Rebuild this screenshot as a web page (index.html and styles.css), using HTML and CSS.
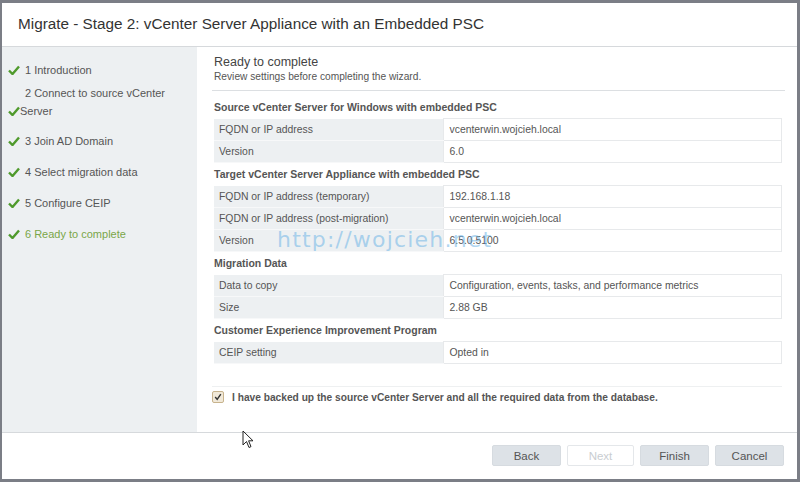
FILE: index.html
```html
<!DOCTYPE html>
<html lang="en">
<head>
    <meta charset="UTF-8">
    <meta name="viewport" content="width=device-width, initial-scale=1.0">
    <title>Migrate - Stage 2</title>
    <link rel="stylesheet" href="styles.css">
</head>
<body>
    <div class="dialog">
        <!-- Title bar -->
        <header class="dialog-header">
            <h1>Migrate - Stage 2: vCenter Server Appliance with an Embedded PSC</h1>
        </header>

        <div class="dialog-body">
            <!-- Wizard steps -->
            <ul class="steps">
                <li><span class="check"><svg viewBox="0 0 12 10" width="12" height="10"><path d="M1 5.5 L4.5 9 L11 1.5" fill="none" stroke="#4f9a2c" stroke-width="2.4"/></svg></span>1 Introduction</li>
                <li class="wrap"><span class="indent">2 Connect to source vCenter</span><br><span class="check tight"><svg viewBox="0 0 12 10" width="12" height="10"><path d="M1 5.5 L4.5 9 L11 1.5" fill="none" stroke="#4f9a2c" stroke-width="2.4"/></svg></span>Server</li>
                <li><span class="check"><svg viewBox="0 0 12 10" width="12" height="10"><path d="M1 5.5 L4.5 9 L11 1.5" fill="none" stroke="#4f9a2c" stroke-width="2.4"/></svg></span>3 Join AD Domain</li>
                <li><span class="check"><svg viewBox="0 0 12 10" width="12" height="10"><path d="M1 5.5 L4.5 9 L11 1.5" fill="none" stroke="#4f9a2c" stroke-width="2.4"/></svg></span>4 Select migration data</li>
                <li><span class="check"><svg viewBox="0 0 12 10" width="12" height="10"><path d="M1 5.5 L4.5 9 L11 1.5" fill="none" stroke="#4f9a2c" stroke-width="2.4"/></svg></span>5 Configure CEIP</li>
                <li class="active"><span class="check"><svg viewBox="0 0 12 10" width="12" height="10"><path d="M1 5.5 L4.5 9 L11 1.5" fill="none" stroke="#4f9a2c" stroke-width="2.4"/></svg></span>6 Ready to complete</li>
            </ul>

            <!-- Summary -->
            <main class="content">
                <div class="intro">
                    <h2>Ready to complete</h2>
                    <p>Review settings before completing the wizard.</p>
                </div>

                <h3>Source vCenter Server for Windows with embedded PSC</h3>
                <table class="summary">
                    <tr><td>FQDN or IP address</td><td>vcenterwin.wojcieh.local</td></tr>
                    <tr><td>Version</td><td>6.0</td></tr>
                </table>

                <h3>Target vCenter Server Appliance with embedded PSC</h3>
                <table class="summary">
                    <tr><td>FQDN or IP address (temporary)</td><td>192.168.1.18</td></tr>
                    <tr><td>FQDN or IP address (post-migration)</td><td>vcenterwin.wojcieh.local</td></tr>
                    <tr><td>Version</td><td>6.5.0.5100</td></tr>
                </table>

                <h3>Migration Data</h3>
                <table class="summary">
                    <tr><td>Data to copy</td><td>Configuration, events, tasks, and performance metrics</td></tr>
                    <tr><td>Size</td><td>2.88 GB</td></tr>
                </table>

                <h3>Customer Experience Improvement Program</h3>
                <table class="summary">
                    <tr><td>CEIP setting</td><td>Opted in</td></tr>
                </table>

                <label class="confirm">
                    <span class="box"><svg viewBox="0 0 10 10" width="8" height="8"><path d="M1.5 5 L4 8 L8.5 1.5" fill="none" stroke="#333" stroke-width="1.8"/></svg></span>
                    I have backed up the source vCenter Server and all the required data from the database.
                </label>
            </main>
        </div>

        <!-- Buttons -->
        <footer class="dialog-footer">
            <button class="btn">Back</button>
            <button class="btn disabled">Next</button>
            <button class="btn">Finish</button>
            <button class="btn">Cancel</button>
        </footer>

        <div class="watermark">http://wojcieh.net</div>
        <svg class="cursor" viewBox="0 0 12 19" width="12" height="19"><path d="M1 1 L1 15 L4.5 11.5 L7 17.5 L9 16.6 L6.6 10.8 L11 10.8 Z" fill="#fff" stroke="#222" stroke-width="1"/></svg>
    </div>
</body>
</html>
```

FILE: styles.css
```css
/* Basic reset */
* {
    margin: 0;
    padding: 0;
    box-sizing: border-box;
}

body {
    background-color: #7b7e86;
    font-family: "Liberation Sans", Arial, sans-serif;
    color: #555;
    padding: 3px 3px 3px 2px;
    height: 482px;
    overflow: hidden;
}

.dialog {
    position: relative;
    background-color: #fff;
    height: 476px;
    display: flex;
    flex-direction: column;
}

/* Title */
.dialog-header {
    height: 44px;
    border-bottom: 1px solid #d6d9dc;
    padding: 0 16px;
    display: flex;
    align-items: center;
}

.dialog-header h1 {
    font-size: 15.3px;
    font-weight: normal;
    color: #333;
    margin-top: -2px;
}

.dialog-body {
    display: flex;
    height: 386px;
    border-bottom: 1px solid #d6d9dc;
}

/* Steps sidebar */
.steps {
    list-style: none;
    width: 195px;
    background-color: #edf0f2;
    padding-top: 14px;
    font-size: 11px;
    color: #555;
}

.steps li {
    line-height: 18px;
    height: 18px;
    margin-bottom: 13px;
    padding-left: 6px;
}

.steps li:first-child {
    margin-bottom: 5px;
}

.steps li.wrap {
    height: 36px;
    margin-bottom: 12px;
}

.steps li.active {
    color: #7aa648;
}

.steps .check {
    display: inline-block;
    width: 17px;
    height: 10px;
    line-height: 0;
    vertical-align: -1px;
}

.steps .check svg {
    display: block;
}

.steps .check.tight {
    width: 12px;
}

.steps .indent {
    padding-left: 17px;
}

/* Content */
.content {
    flex: 1;
    padding: 7px 15px 0 17px;
}

.intro {
    border-bottom: 1px solid #dcdfe2;
    padding-bottom: 6px;
    margin-right: -3px;
    margin-left: -2px;
    padding-left: 2px;
}

.intro h2 {
    font-size: 12.5px;
    font-weight: normal;
    color: #444;
    line-height: 16px;
}

.intro p {
    font-size: 10.2px;
    line-height: 14px;
    color: #555;
}

.content h3 {
    font-size: 10.5px;
    font-weight: bold;
    color: #555;
    height: 22px;
    line-height: 22px;
}

.intro + h3 {
    margin-top: 5px;
}

.summary {
    width: 100%;
    border-collapse: collapse;
    font-size: 10.4px;
    color: #555;
}

.summary td {
    height: 22px;
    padding: 0 5px;
}

.summary td:first-child {
    width: 229px;
    background-color: #edf0f2;
    border-bottom: 1px solid #f7f8f9;
}

.summary td:last-child {
    border: 1px solid #e7e9eb;
    padding-left: 6px;
}

.confirm {
    display: flex;
    align-items: center;
    gap: 8px;
    margin-top: 22px;
    border-top: 1px solid #eef0f1;
    padding-top: 4px;
    margin-left: -2px;
    font-size: 10.2px;
    font-weight: bold;
    color: #555;
}

.confirm .box {
    width: 12px;
    height: 12px;
    border: 1px solid #c7b38d;
    background-color: #f1e9d9;
    border-radius: 2px;
    display: flex;
    align-items: center;
    justify-content: center;
}

/* Footer buttons */
.dialog-footer {
    flex: 1;
    display: flex;
    justify-content: flex-end;
    align-items: flex-start;
    gap: 6px;
    padding: 12px 13px 0 0;
}

.btn {
    width: 69px;
    height: 21px;
    border: 1px solid #d6dbe0;
    border-radius: 2px;
    background-color: #dde2e7;
    font-family: "Liberation Sans", Arial, sans-serif;
    font-size: 11.5px;
    color: #555;
}

.btn.disabled {
    width: 67px;
    background-color: #fff;
    border-color: #e4e7ea;
    color: #c9cdd1;
}

/* Overlays from the screenshot */
.watermark {
    position: absolute;
    left: 275px;
    top: 224px;
    font-family: "DejaVu Sans", sans-serif;
    font-size: 22px;
    letter-spacing: 1.2px;
    color: rgba(110, 180, 230, 0.55);
    pointer-events: none;
}

.cursor {
    position: absolute;
    left: 240px;
    top: 427px;
}
```
